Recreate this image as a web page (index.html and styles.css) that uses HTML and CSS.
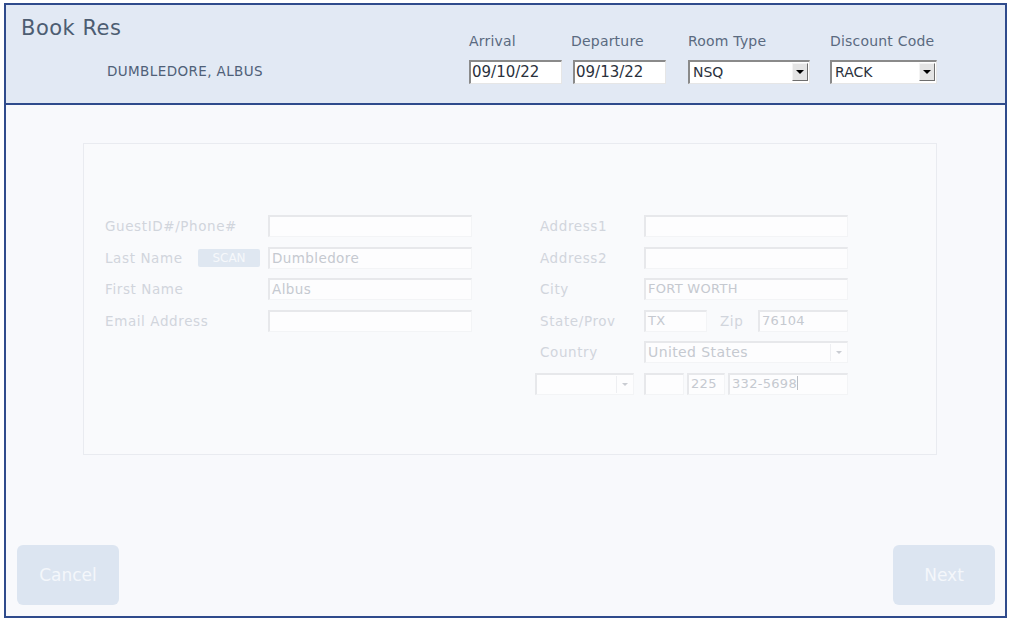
FILE: index.html
```html
<!DOCTYPE html>
<html>
<head>
<meta charset="utf-8">
<link rel="stylesheet" href="styles.css">
</head>
<body>
<div class="frame">
  <header class="head">
    <div class="head-left">
      <div class="title">Book Res</div>
      <div class="guest">DUMBLEDORE, ALBUS</div>
    </div>
    <div class="head-fields">
      <div class="hf c1">
        <div class="hl">Arrival</div>
        <div class="hin w93">09/10/22</div>
      </div>
      <div class="hf c2">
        <div class="hl">Departure</div>
        <div class="hin w93 ml2">09/13/22</div>
      </div>
      <div class="hf c3">
        <div class="hl">Room Type</div>
        <div class="hin hsel w122">NSQ<span class="harrow"><span class="tri"></span></span></div>
      </div>
      <div class="hf c4">
        <div class="hl">Discount Code</div>
        <div class="hin hsel w107">RACK<span class="harrow"><span class="tri"></span></span></div>
      </div>
    </div>
  </header>
  <main class="main">
    <section class="card">
      <div class="col left">
        <div class="row"><span class="lab">GuestID#/Phone#</span><span class="inp w204"></span></div>
        <div class="row"><span class="lab lab-short">Last Name</span><span class="scan">SCAN</span><span class="inp w204">Dumbledore</span></div>
        <div class="row"><span class="lab">First Name</span><span class="inp w204">Albus</span></div>
        <div class="row"><span class="lab">Email Address</span><span class="inp w204"></span></div>
      </div>
      <div class="col right">
        <div class="row"><span class="lab rl">Address1</span><span class="inp w204"></span></div>
        <div class="row"><span class="lab rl">Address2</span><span class="inp w204"></span></div>
        <div class="row"><span class="lab rl">City</span><span class="inp w204 small">FORT WORTH</span></div>
        <div class="row"><span class="lab rl">State/Prov</span><span class="inp w63 small">TX</span><span class="lab zip">Zip</span><span class="inp w90 small">76104</span></div>
        <div class="row"><span class="lab rl">Country</span><span class="inp w204 sel">United States<span class="farrow"><span class="ftri"></span></span></span></div>
        <div class="row phone"><span class="inp w99 sel"><span class="farrow"><span class="ftri"></span></span></span><span class="inp w40 ml10"></span><span class="inp w38 ml3 small">225</span><span class="inp w120 ml3 small">332-5698<span class="caret"></span></span></div>
      </div>
    </section>
  </main>
  <footer class="foot">
    <button class="btn">Cancel</button>
    <button class="btn">Next</button>
  </footer>
</div>
</body>
</html>
```

FILE: styles.css
```css
* { box-sizing: border-box; }
html, body { margin: 0; padding: 0; background: #ffffff; }
body { font-family: "DejaVu Sans", Verdana, sans-serif; }

.frame {
  margin: 3px 0 0 4px;
  width: 1003px;
  height: 615px;
  border: 2px solid #2f4b8c;
  background: #f8f9fc;
  display: flex;
  flex-direction: column;
}

.head {
  height: 100px;
  background: #e2e9f4;
  border-bottom: 2px solid #2f4b8c;
  display: flex;
  flex-shrink: 0;
}
.head-left { width: 463px; padding: 10px 0 0 15px; }
.title { font-size: 21px; color: #4d5d72; line-height: 26px; letter-spacing: 0.5px; }
.guest { margin: 21px 0 0 86px; font-size: 13.5px; color: #4f6078; line-height: 18px; letter-spacing: 0.4px; }

.head-fields { display: flex; padding-top: 28px; }
.hf { display: flex; flex-direction: column; }
.c1 { width: 102px; }
.c2 { width: 117px; }
.c3 { width: 142px; }
.c4 { width: 120px; }
.hl { font-size: 14px; color: #5a6a80; line-height: 17px; height: 27px; letter-spacing: 0.2px; }
.hin {
  height: 24px;
  background: #ffffff;
  border-top: 2px solid #8a8a8a;
  border-left: 2px solid #8a8a8a;
  border-right: 1px solid #e6e6e6;
  border-bottom: 1px solid #e6e6e6;
  font-size: 15px;
  color: #2a313c;
  line-height: 21px;
  padding-left: 1px;
  position: relative;
}
.w93 { width: 93px; }
.w122 { width: 122px; }
.w107 { width: 107px; }
.ml2 { margin-left: 2px; }
.hsel { padding-left: 3px; font-size: 14px; }
.harrow {
  position: absolute;
  right: 1px;
  top: 1px;
  width: 16px;
  height: 18px;
  background: #e4e4e4;
  border-top: 1px solid #f4f4f4;
  border-left: 1px solid #f4f4f4;
  border-right: 1px solid #6e6e6e;
  border-bottom: 1px solid #6e6e6e;
  display: flex;
  align-items: center;
  justify-content: center;
}
.tri {
  width: 0; height: 0;
  border-left: 4px solid transparent;
  border-right: 4px solid transparent;
  border-top: 4px solid #000;
}

.main { flex: 1; padding: 38px 0 0 77px; }
.card {
  width: 854px;
  height: 312px;
  border: 1px solid #e9ebf0;
  background: #f9fafc;
  display: flex;
  padding: 71px 0 0 21px;
}
.col { display: flex; flex-direction: column; }
.left { width: 435px; }
.right { width: 330px; }
.right .phone { margin-left: -5px; }
.row { display: flex; align-items: center; height: 31.6px; padding-bottom: 9.6px; }
.row > * { flex-shrink: 0; }
.lab { font-size: 13.5px; color: #d1d5dc; width: 163px; line-height: 22px; white-space: nowrap; letter-spacing: 0.6px; }
.lab-short { width: 93px; }
.rl { width: 104px; }
.zip { width: 38px; margin-left: 13px; }
.inp {
  height: 22px;
  background: #fdfdfe;
  border-top: 2px solid #e7e8eb;
  border-left: 2px solid #e7e8eb;
  border-right: 1px solid #f3f4f6;
  border-bottom: 1px solid #f3f4f6;
  font-size: 13.5px;
  letter-spacing: 0.4px;
  line-height: 18px;
  color: #c5c9d0;
  padding-left: 2px;
  position: relative;
  white-space: nowrap;
}
.small { font-size: 13px; letter-spacing: 0.3px; }
.w204 { width: 204px; }
.w63 { width: 63px; }
.w90 { width: 90px; }
.w99 { width: 99px; }
.w40 { width: 40px; }
.w38 { width: 38px; }
.w120 { width: 120px; }
.ml10 { margin-left: 10px; }
.ml3 { margin-left: 3px; }
.scan {
  width: 62px;
  height: 18px;
  background: #dfe7f1;
  color: #f6f8fb;
  font-size: 12px;
  line-height: 18px;
  text-align: center;
  border-radius: 2px;
  margin-right: 8px;
}
.sel { font-size: 14px; letter-spacing: 0.4px; }
.farrow {
  position: absolute;
  right: 1px;
  top: 1px;
  width: 16px;
  height: 17px;
  border-left: 1px solid #eeeff2;
  display: flex;
  align-items: center;
  justify-content: center;
}
.ftri {
  width: 0; height: 0;
  border-left: 3px solid transparent;
  border-right: 3px solid transparent;
  border-top: 3px solid #c9ccd2;
}
.caret {
  display: inline-block;
  width: 1px;
  height: 14px;
  background: #b9bdc4;
  vertical-align: -2px;
}

.foot {
  display: flex;
  justify-content: space-between;
  padding: 0 10px 11px 11px;
  flex-shrink: 0;
}
.btn {
  width: 102px;
  height: 60px;
  border: none;
  border-radius: 6px;
  background: #dce5f1;
  color: #f4f7fb;
  font-family: "DejaVu Sans", Verdana, sans-serif;
  font-size: 17px;
  padding: 0;
}
```
